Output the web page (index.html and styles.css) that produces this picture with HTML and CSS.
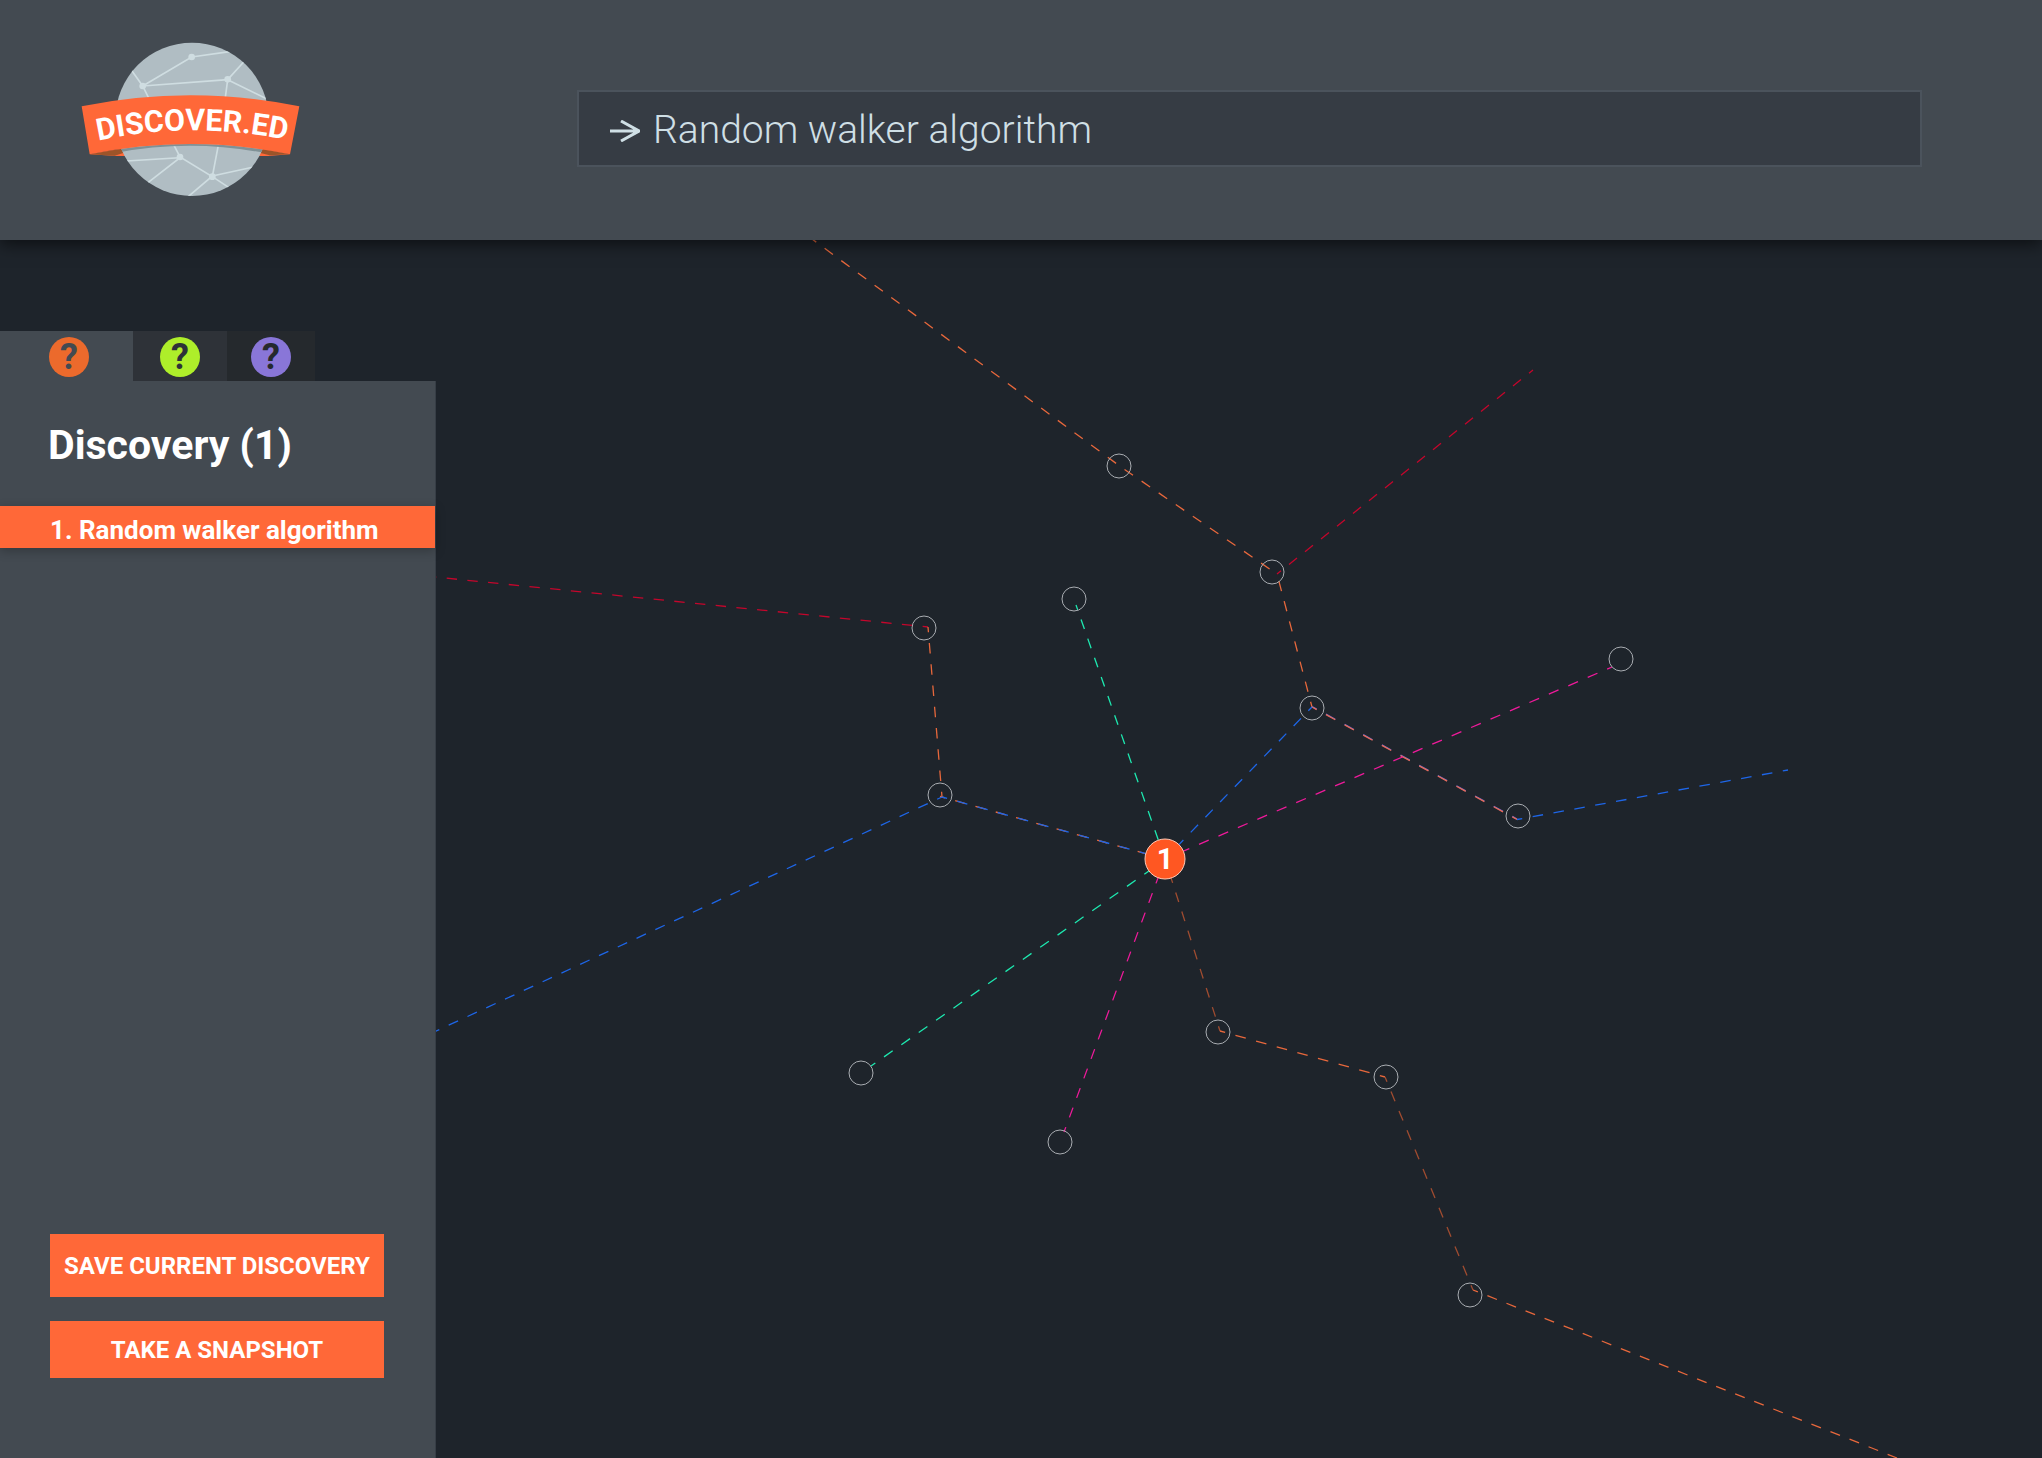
FILE: index.html
```html
<!DOCTYPE html>
<html lang="en">
<head>
    <meta charset="UTF-8">
    <meta name="viewport" content="width=device-width, initial-scale=1.0">
    <title>Discover.ed</title>
    <link rel="stylesheet" href="styles.css">
</head>
<body>
    <header class="header">
        <a href="#" class="logo" aria-label="Discover.ed">
            <svg viewBox="64 66 657 465">
                <defs>
                    <clipPath id="globe"><circle cx="397" cy="298" r="230"/></clipPath>
                    <path id="arc" d="M96 366 Q396 297 700 364"/>
                </defs>
                <!-- ribbon folds -->
                <path class="ribbon" d="M90 403 L200 384 V408 H170z M691 403 L590 384 V408 H625z"/>
                <path class="fold" d="M90 403 L200 384 V396 L165 407z M691 403 L590 384 V396 L630 406z"/>
                <circle class="globe" cx="397" cy="298" r="230"/>
                <g clip-path="url(#globe)">
                    <path class="links" d="M510 95 L396 111 L249 198 L504 179 L552 126 M215 150 L249 198 L270 240 M622 237 L504 179 L496 240 M340 370 L361 411 L458 470 L477 370 M200 423 L361 413 L262 490 M582 441 L458 468 L383 532 M458 470 L508 503"/>
                    <g class="dots">
                        <circle cx="396" cy="111" r="10"/>
                        <circle cx="249" cy="198" r="10"/>
                        <circle cx="504" cy="178" r="10"/>
                        <circle cx="361" cy="411" r="10"/>
                        <circle cx="458" cy="470" r="10"/>
                    </g>
                    <path class="shade" d="M90 403 Q392 341 691 403 V416 Q392 339 90 416z"/>
                </g>
                <path class="ribbon" d="M66 259 Q392 193 719 259 L691 403 Q392 341 90 403z"/>
                <text class="brand" text-anchor="middle"><textPath href="#arc" startOffset="50%">DISCOVER.ED</textPath></text>
            </svg>
        </a>
        <form class="search">
            <label for="topic" aria-label="Topic">
                <svg viewBox="0 0 30 22"><path d="M0 11 H29 M11 1 L29 11 L11 21"/></svg>
            </label>
            <input type="text" id="topic" name="topic" value="Random walker algorithm">
        </form>
    </header>

    <main class="content">
        <!-- Graph -->
        <svg class="graph" viewBox="0 240 2042 1218" preserveAspectRatio="xMinYMin slice">
            <g class="lines">
                <path class="orange" stroke-dasharray="10.3 10.4" d="M812 239 L1121 467 L1277 574"/>
                <path class="orange" stroke-dasharray="10.4" stroke-dashoffset="5" d="M1312 707 L1277 574"/>
                <path class="red" pathLength="320" d="M1277 574 L1533 370"/>
                <path class="purple" pathLength="220" d="M1312 706.5 L1517 819"/>
                <path class="coral" pathLength="220" d="M1312 707 L1517 819.5"/>
                <path class="blue" pathLength="260" d="M1517 819.5 L1788 770"/>
                <path class="blue" pathLength="200" d="M1312 707 L1165 859"/>
                <path class="red" stroke-dasharray="10.4" d="M928 627 L435 577"/>
                <path class="orange" pathLength="160" d="M928 627 L942 797"/>
                <path class="orange" pathLength="220" d="M940 796.5 L1163 858.5"/>
                <path class="blue" pathLength="220" d="M942 797 L1165 859"/>
                <path class="blue" stroke-dasharray="10.35" stroke-dashoffset="-12" d="M942 797 L434 1032"/>
                <path class="green" stroke-dasharray="10.15" stroke-dashoffset="0" d="M1076 605 L1165 859"/>
                <path class="green" pathLength="340" d="M1166 859 L871 1066"/>
                <path class="pink" pathLength="460" d="M1165 859 L1612 667"/>
                <path class="pink" pathLength="280" d="M1165 859 L1064 1132"/>
                <path class="brown" pathLength="180" d="M1165 859 L1220 1031"/>
                <path class="orange" pathLength="160" d="M1220 1031 L1385 1077"/>
                <path class="brown" pathLength="220" d="M1385 1077 L1473 1290"/>
                <path class="orange" stroke-dasharray="10.25" d="M1473 1290 L1897 1458"/>
            </g>
            <g class="nodes">
                <circle cx="1119" cy="466" r="12"/>
                <circle cx="1272" cy="572" r="12"/>
                <circle cx="1074" cy="599" r="12"/>
                <circle cx="924" cy="628" r="12"/>
                <circle cx="1621" cy="659" r="12"/>
                <circle cx="1312" cy="708" r="12"/>
                <circle cx="940" cy="795" r="12"/>
                <circle cx="1518" cy="816" r="12"/>
                <circle cx="1218" cy="1032" r="12"/>
                <circle cx="861" cy="1073" r="12"/>
                <circle cx="1386" cy="1077" r="12"/>
                <circle cx="1060" cy="1142" r="12"/>
                <circle cx="1470" cy="1295" r="12"/>
                <circle class="active" cx="1165" cy="859" r="20"/>
            </g>
            <text class="node-label" x="1165" y="869" text-anchor="middle">1</text>
        </svg>

        <!-- Discovery panel -->
        <aside class="sidebar">
            <nav class="tabs">
                <button type="button" class="tab tab-orange" aria-label="First discovery"><span>?</span></button>
                <button type="button" class="tab tab-green" aria-label="Second discovery"><span>?</span></button>
                <button type="button" class="tab tab-purple" aria-label="Third discovery"><span>?</span></button>
            </nav>
            <div class="panel">
                <h1>Discovery (1)</h1>
                <a href="#" class="item">1. Random walker algorithm</a>
                <div class="actions">
                    <button type="button" class="save">SAVE CURRENT DISCOVERY</button>
                    <button type="button">TAKE A SNAPSHOT</button>
                </div>
            </div>
        </aside>
    </main>
</body>
</html>
```

FILE: styles.css
```css
* {
    box-sizing: border-box;
}
body {
    margin: 0;
    min-height: 100vh;
    display: flex;
    flex-direction: column;
    background: #1e242b;
    color: #fff;
    font-family: Roboto, "Liberation Sans", sans-serif;
}
button {
    border: 0;
    padding: 0;
    color: inherit;
    font-family: inherit;
    cursor: pointer;
}

/* Header */
.header {
    position: relative;
    z-index: 2;
    display: flex;
    align-items: flex-start;
    padding: 42px 120px 43px 81px;
    background: #434a51;
    box-shadow: 0 4px 16px rgba(0, 0, 0, 0.6);
}
.logo svg {
    display: block;
    width: 219px;
    height: 155px;
}
.globe {
    fill: #b0bdc3;
}
.links {
    fill: none;
    stroke: #cfdde1;
    stroke-width: 5;
}
.dots {
    fill: #cfdde1;
}
.shade {
    fill: #7f9196;
}
.ribbon {
    fill: #ff6838;
}
.fold {
    fill: #9c5429;
}
.brand {
    fill: #fff;
    font-size: 91px;
    font-weight: 700;
}
.search {
    flex: 1;
    display: flex;
    align-items: center;
    gap: 13px;
    height: 77px;
    margin: 48px 0 0 277px;
    padding: 0 31px;
    background: #363c44;
    border: 2px solid #4b535c;
}
.search svg {
    display: block;
    width: 30px;
    height: 22px;
    margin-top: 4px;
    fill: none;
    stroke: #cfdfe5;
    stroke-width: 3;
}
.search input {
    flex: 1;
    min-width: 0;
    padding: 2px 0 0;
    border: 0;
    outline: 0;
    background: none;
    color: #cfdfe5;
    font-family: inherit;
    font-size: 39px;
    font-weight: 300;
}

/* Graph */
.content {
    position: relative;
    flex: 1;
    display: flex;
}
.graph {
    position: absolute;
    top: 0;
    left: 0;
    width: 100%;
    height: 100%;
}
.lines path {
    fill: none;
    stroke-width: 1.3;
    stroke-dashoffset: 5;
}
.lines path[pathLength] {
    stroke-dasharray: 10;
}
.orange {
    stroke: #e8683c;
}
.coral {
    stroke: #e86a58;
}
.brown {
    stroke: #a04c30;
}
.red {
    stroke: #c4062c;
}
.blue {
    stroke: #1e66e8;
}
.purple {
    stroke: #6a6ad0;
}
.green {
    stroke: #1de9b0;
}
.pink {
    stroke: #ef1a9b;
}
.nodes circle {
    fill: none;
    stroke: #a9adb2;
}
.nodes .active {
    fill: #ff5722;
    stroke: #ffc9b5;
}
.node-label {
    fill: #fff;
    font-size: 29px;
    font-weight: 700;
}

/* Sidebar */
.sidebar {
    position: relative;
    display: flex;
    flex-direction: column;
    width: 436px;
    padding-top: 91px;
}
.tabs {
    display: flex;
    height: 50px;
}
.tab {
    display: flex;
    align-items: center;
    justify-content: center;
    width: 88px;
    padding-top: 2px;
    background: #25292d;
    color: #25292d;
}
.tab span {
    width: 40px;
    border-radius: 50%;
    background: #8976d8;
    font-size: 36px;
    font-weight: 700;
    line-height: 40px;
}
.tab-orange {
    justify-content: flex-start;
    width: 133px;
    padding-left: 49px;
    background: #434a51;
    color: #434a51;
}
.tab-orange span {
    background: #ec6a2c;
}
.tab-green {
    width: 94px;
    background: #2e3238;
    color: #2e3238;
}
.tab-green span {
    background: #aeee2a;
}
.panel {
    flex: 1;
    display: flex;
    flex-direction: column;
    background: #434a51;
    border-right: 1px solid #373e46;
}
.panel h1 {
    margin: 38px 48px 35px;
    font-size: 41px;
    font-weight: 700;
    line-height: 52px;
}
.item {
    padding: 6px 50px 0;
    background: #ff6838;
    box-shadow: 0 3px 10px rgba(0, 0, 0, 0.25);
    color: #fff;
    font-size: 26px;
    font-weight: 700;
    line-height: 36px;
    text-decoration: none;
    white-space: nowrap;
}
.actions {
    display: flex;
    flex-direction: column;
    gap: 24px;
    margin-top: auto;
    padding: 24px 51px 80px 50px;
}
.actions button {
    height: 57px;
    background: #ff6838;
    font-size: 24px;
    font-weight: 700;
    white-space: nowrap;
}
.actions .save {
    height: 63px;
}
```
